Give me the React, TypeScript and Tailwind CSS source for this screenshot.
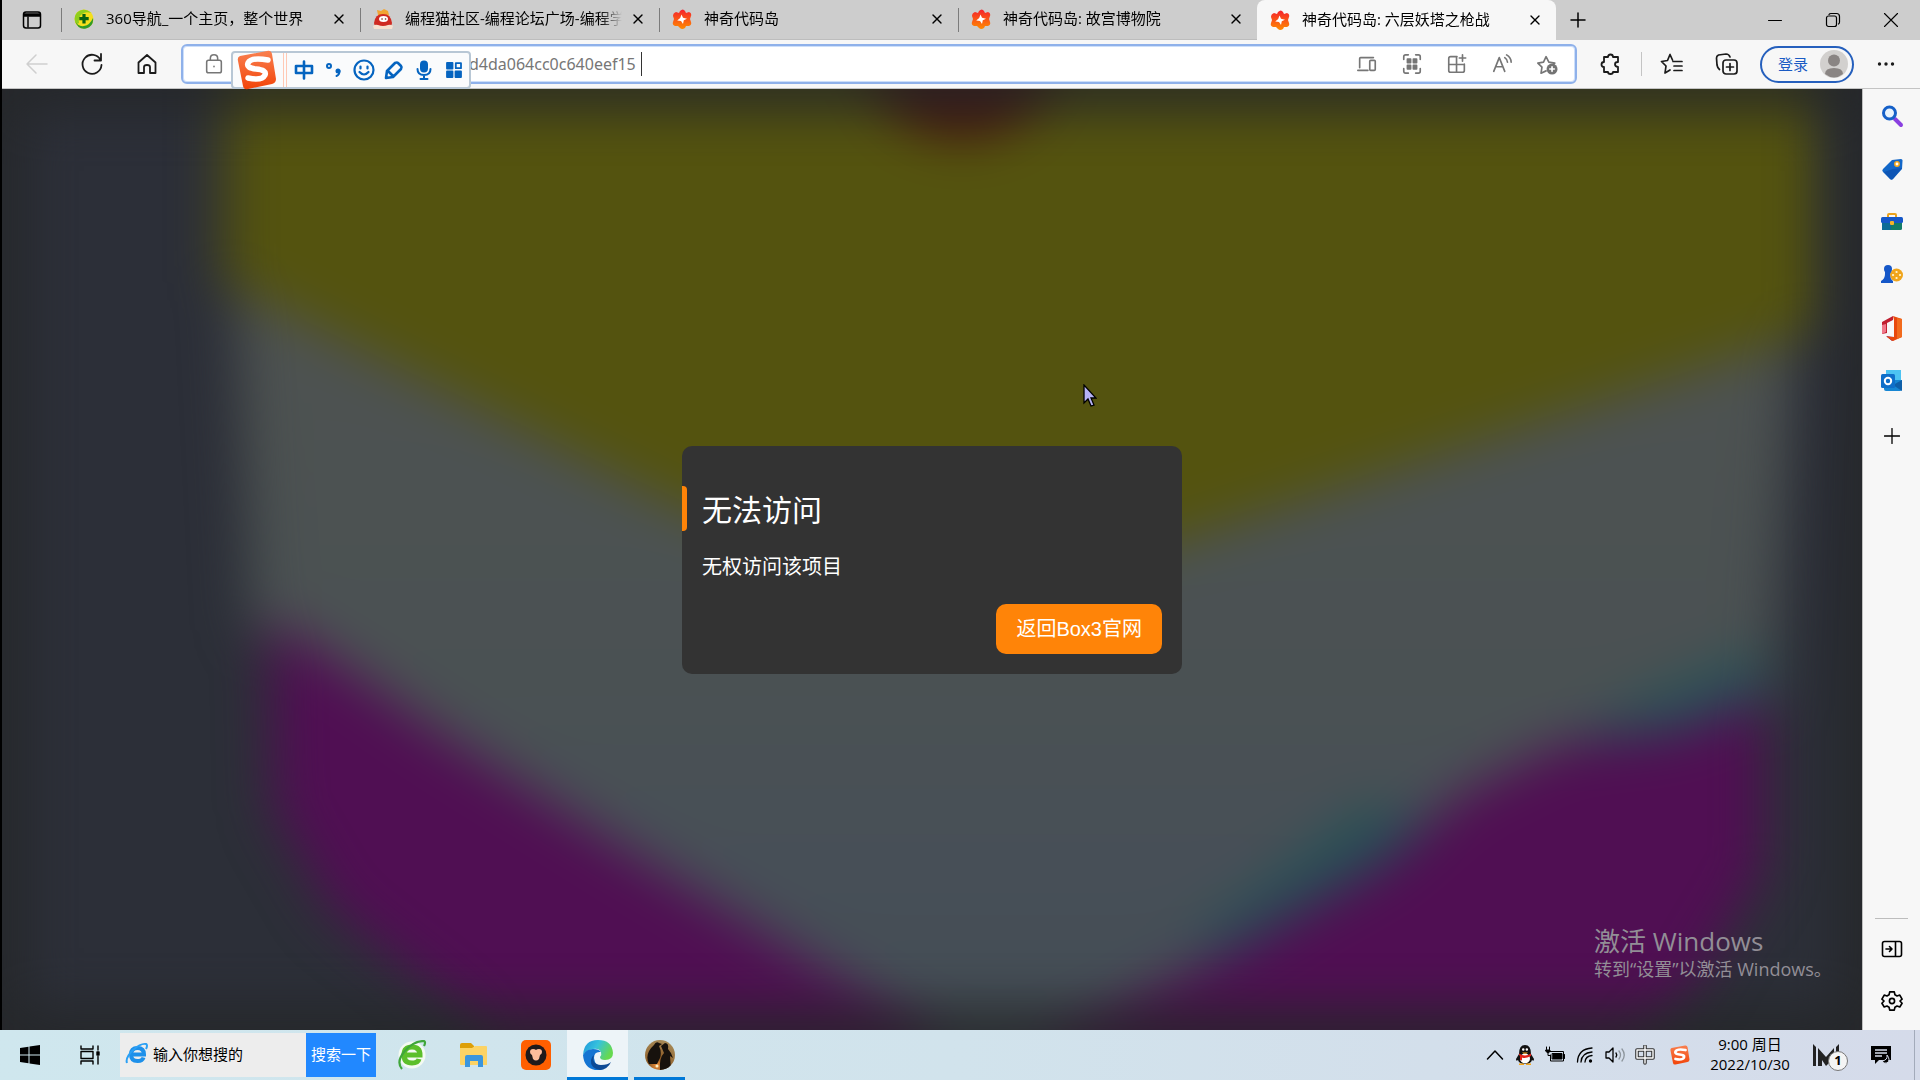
import type { ReactNode } from 'react'
import { X, Plus } from 'lucide-react'

const uiFont = "font-['Open_Sans','Noto_Sans_CJK_SC',sans-serif]"

type IconProps = { children: ReactNode; size?: string; box?: string; width?: number }

function Line({ children, size = 'size-6', box = '0 0 24 24', width = 1.5 }: IconProps) {
  return (
    <svg
      viewBox={box}
      className={`${size} shrink-0`}
      fill="none"
      stroke="currentColor"
      strokeWidth={width}
      strokeLinecap="round"
      strokeLinejoin="round"
      aria-hidden="true"
    >
      {children}
    </svg>
  )
}

function NavFavicon() {
  return (
    <svg viewBox="0 0 20 20" className="size-5 shrink-0" aria-hidden="true">
      <circle cx="10" cy="10" r="9.500" fill="#f5df1c" />
      <path d="M2 5A9.500 9.500 0 0 1 17 4Q12 2 8 5 4 8 5 14 2 16 1 12Q0 8 2 5Z" fill="#8fce1d" />
      <path d="M1 12Q4 18 10 17Q16 16 19 9Q20 17 12 19.500Q4 21 1 12Z" fill="#2f9a28" />
      <path d="M10 5v9.500M5.300 9.700h9.400" stroke="#0a6311" strokeWidth="3.200" />
    </svg>
  )
}

function CatFavicon() {
  return (
    <svg viewBox="0 0 20 20" className="size-5 shrink-0" aria-hidden="true">
      <path d="M5 6 4 1l4 1 3-2 4 2 1 4-2 3H6Z" fill="#f1a533" />
      <path d="M1 14Q2 5 10 5t9 9l-1 4H2Z" fill="#cf2a22" />
      <path d="M0 17q2-2 5-1 5 2 10 0 3-1 5 1l-1 3H1Z" fill="#f6e0cf" />
      <ellipse cx="10.500" cy="10" rx="4.500" ry="3" fill="#fff" />
      <path d="M9 10h.1M12.500 10h.1" stroke="#7b2b20" strokeWidth="1.600" strokeLinecap="round" />
    </svg>
  )
}

function IslandFavicon() {
  return (
    <svg viewBox="0 0 20 20" className="size-5 shrink-0" aria-hidden="true">
      <defs>
        <linearGradient id="island" x1="0" y1="0" x2="0" y2="1">
          <stop offset="0" stopColor="#f5222d" />
          <stop offset="1" stopColor="#ff8a00" />
        </linearGradient>
      </defs>
      <path
        d="M8 2q3-3 5 0l1 2 3-1q3 1 2 4l-1 3 1 3q1 3-2 4l-3 0-1 2q-3 2-5 0l-2-2-3 0Q0 16 1 13l1-3-1-3q0-3 3-4l3 1Z"
        fill="url(#island)"
      />
      <path d="M9.500 5.500 11 8.700l4 1-3.200 1.600-.8 3.700-2-3-3.800-.4 3-2.500Z" fill="#fff" />
    </svg>
  )
}

function SogouLogo({ className }: { className: string }) {
  return (
    <svg viewBox="0 0 40 40" className={className} aria-hidden="true">
      <defs>
        <linearGradient id="sogou" x1="0" y1="0" x2="0" y2="1">
          <stop offset="0" stopColor="#f98050" />
          <stop offset="1" stopColor="#f24409" />
        </linearGradient>
      </defs>
      <path d="M3 6 30 1q4-1 5 3l4 25q0 4-4 5L11 39q-4 1-5-3L1 11q-1-4 2-5Z" fill="url(#sogou)" />
      <path
        d="M31 10q-17-3-20 3-2 5 8 6 11 1 9 6-3 6-17 3"
        fill="none"
        stroke="#fff"
        strokeWidth="5.500"
        strokeLinecap="round"
      />
    </svg>
  )
}

const tabs = [
  { title: '360导航_一个主页，整个世界', icon: <NavFavicon /> },
  { title: '编程猫社区-编程论坛广场-编程学', icon: <CatFavicon /> },
  { title: '神奇代码岛', icon: <IslandFavicon /> },
  { title: '神奇代码岛: 故宫博物院', icon: <IslandFavicon /> },
  { title: '神奇代码岛: 六层妖塔之枪战', icon: <IslandFavicon />, active: true },
]

function TabStrip() {
  return (
    <div className="flex h-10 bg-[#cdcdcd] text-black">
      <button type="button" aria-label="标签页操作" className="flex w-[59px] shrink-0 items-center justify-center">
        <Line size="size-5" box="0 0 20 20">
          <rect x="1.500" y="2" width="17" height="16" rx="2.500" />
          <path d="M2 4h16v2H2Z" fill="currentColor" />
          <path d="M6 7v10" />
        </Line>
      </button>
      {tabs.map((tab) => (
        <div
          key={tab.title}
          className={`relative flex min-w-0 flex-[0_1_299px] items-center pr-[11px] pb-px pl-[11px] ${
            tab.active ? 'rounded-t-lg bg-[#f7f7f7]' : 'border-b border-[#bdbdbd]'
          }`}
        >
          {!tab.active && <span className="absolute top-2 left-0 h-6 w-px bg-[#7b7b7b]" />}
          <button type="button" className="flex min-w-0 flex-1 items-center gap-3 pl-0.5 text-left">
            {tab.icon}
            <span className="min-w-0 flex-1 overflow-hidden mask-r-from-90% mask-r-to-100% pb-0.5 text-[15px] leading-5 whitespace-nowrap">
              {tab.title}
            </span>
          </button>
          <button type="button" aria-label="关闭标签页" className="ml-1.5 flex size-5 shrink-0 items-center justify-center">
            <X className="size-4" strokeWidth={2} />
          </button>
        </div>
      ))}
      <button type="button" aria-label="新建标签页" className="flex w-11 shrink-0 items-center justify-center">
        <Plus className="size-6" strokeWidth={1.5} />
      </button>
      <div className="ml-auto flex">
        <button type="button" aria-label="最小化" className="flex w-[58px] items-center justify-center">
          <Line size="size-4" box="0 0 16 16" width={1}>
            <path d="M1.500 8.500h13" />
          </Line>
        </button>
        <button type="button" aria-label="还原" className="flex w-[58px] items-center justify-center">
          <Line size="size-4" box="0 0 16 16" width={1.2}>
            <rect x="1.500" y="4" width="10" height="10.500" rx="2" />
            <path d="M4 2.500Q4.500 1.500 6 1.500h5.500q3 0 3 3V10q0 1.500-1 2" />
          </Line>
        </button>
        <button type="button" aria-label="关闭" className="flex w-[58px] items-center justify-center">
          <Line size="size-4" box="0 0 16 16" width={1.1}>
            <path d="m1.500 1.500 13 13M14.500 1.500l-13 13" />
          </Line>
        </button>
      </div>
    </div>
  )
}

const addressActions = [
  {
    label: '发送到设备',
    icon: (
      <>
        <path d="M4 16V6q0-1 1-1h14M2 19h11" />
        <rect x="15" y="8" width="6" height="11" rx="1" />
      </>
    ),
  },
  {
    label: '二维码',
    icon: (
      <>
        <path d="M3 7V4q0-2 2-2h3M16 2h3q2 0 2 2v3M21 17v3q0 2-2 2h-3M8 22H5q-2 0-2-2v-3" />
        <path d="M7 6.500h3.500v4H7ZM13.500 6.500H17v4h-3.500ZM7 13.500h3.500v4H7ZM13.500 13.500H17v4h-3.500Z" fill="currentColor" />
      </>
    ),
  },
  {
    label: '应用可用',
    icon: (
      <path d="M12 4H5Q3 4 3 6v13q0 2 2 2h13q2 0 2-2v-7M3 12.500h17M11.500 4v17M18 2v7M14.500 5.500h7" />
    ),
  },
  {
    label: '大声朗读',
    icon: <path d="M3 20 9 5l6 15M5 15h8M15 5q3 2 3 5M17 2q5 3 5 8" />,
  },
  {
    label: '添加到收藏夹',
    icon: (
      <>
        <path d="M11 19.500 5.500 22l1-6.500L2 11l6.200-1L11 4l3 6 6.500 1-2 2" />
        <circle cx="17.500" cy="17.500" r="6" fill="#737373" stroke="none" />
        <path d="M17.500 15v5M15 17.500h5" stroke="#fff" />
      </>
    ),
  },
]

function InputMethodBar() {
  const item = 'flex w-[30px] shrink-0 items-center justify-center'
  return (
    <div className="absolute top-[51px] left-[229px] z-10 flex h-[38px] w-[240px] rounded border-2 border-[#b8c7d5] bg-[#fafbfc] text-[#0564c0]">
      <SogouLogo className="ml-1 size-10 shrink-0 self-center" />
      <span className="mr-0.5 ml-1.5 w-1 shrink-0 border-x border-[#ffc9b5]" />
      <button type="button" aria-label="中文" className={item}>
        <Line size="size-5" box="0 0 20 20" width={2.6}>
          <path d="M2 6h16v7H2ZM10 1.500v17" />
        </Line>
      </button>
      <button type="button" aria-label="标点" className={item}>
        <Line size="size-5" box="0 0 20 20" width={2}>
          <circle cx="5" cy="6" r="2" />
          <circle cx="14" cy="11" r="1.500" fill="currentColor" />
          <path d="M15.500 11q0 4-3 5" />
        </Line>
      </button>
      <button type="button" aria-label="表情" className={item}>
        <Line size="size-6" width={2.2}>
          <circle cx="12" cy="12" r="9.500" />
          <path d="M8.500 8.500v2M15.500 8.500v2M7.500 14q4.500 5 9 0" />
        </Line>
      </button>
      <button type="button" aria-label="手写" className={item}>
        <Line size="size-5" box="0 0 20 20" width={2.6}>
          <path d="m2 18 1-7 8-8q2-1 3 0l3 3q1 1 0 3l-8 8ZM4 11l5 5" />
        </Line>
      </button>
      <button type="button" aria-label="语音" className={item}>
        <Line size="size-5" box="0 0 20 20" width={2}>
          <rect x="7" y="1.500" width="6" height="10" rx="3" fill="currentColor" />
          <path d="M3.500 9q0 6 6.500 6t6.500-6M10 15v3M6.500 19h7" />
        </Line>
      </button>
      <button type="button" aria-label="工具箱" className={item}>
        <Line size="size-4" box="0 0 16 16" width={1.8}>
          <path d="M1 1h5.500v5.500H1ZM1 9.500h5.500V15H1ZM9.500 9.500H15V15H9.500Z" fill="currentColor" />
          <path d="M9.800 1.200H15v5H9.800Z" />
        </Line>
      </button>
    </div>
  )
}

function Toolbar() {
  const nav = 'flex w-[55px] shrink-0 items-center justify-center'
  return (
    <div className="flex h-[49px] items-center border-b border-[#c4c4c4] bg-[#f7f7f7] pr-0.5 pl-[7px] text-[#1b1b1b]">
      <button type="button" aria-label="后退" className={`${nav} text-[#cfcfcf]`}>
        <Line>
          <path d="M22 12H2M11 3l-9 9 9 9" />
        </Line>
      </button>
      <button type="button" aria-label="刷新" className={nav}>
        <Line width={1.8}>
          <path d="M20.500 8A9.500 9.500 0 1 0 21.500 13M21 2v6.500h-6.500" />
        </Line>
      </button>
      <button type="button" aria-label="主页" className={nav}>
        <Line width={1.8}>
          <path d="M3.500 10.500 12 3l8.500 7.500V21H15v-6q0-2-3-2t-3 2v6H3.500Z" />
        </Line>
      </button>
      <div className="ml-[7px] flex h-10 min-w-0 flex-1 items-center rounded-md border-2 border-[#8fb1ea] bg-white pr-1.5 text-[#767676] shadow-[inset_0_0_0_1px_#cddffa]">
        <button type="button" aria-label="查看站点信息" className="ml-5 shrink-0">
          <Line size="size-[22px]" width={1.7}>
            <rect x="4" y="8" width="16" height="13.500" rx="2" />
            <path d="M8 8V6q0-4 4-4t4 4v2M12 14.500v.6" />
          </Line>
        </button>
        <input
          aria-label="地址栏"
          defaultValue="d4da064cc0c640eef15"
          className="ml-[244px] w-[172px] bg-transparent font-['Noto_Sans',sans-serif] text-base leading-6 outline-none"
        />
        <span className="h-6 w-px bg-[#333333]" />
        <div className="ml-auto flex">
          {addressActions.map((action) => (
            <button key={action.label} type="button" aria-label={action.label} className="flex w-[45px] items-center justify-center">
              <Line size="size-[22px]" width={1.8}>
                {action.icon}
              </Line>
            </button>
          ))}
        </div>
      </div>
      <button type="button" aria-label="扩展" className="ml-1 flex w-[60px] items-center justify-center">
        <Line width={1.8}>
          <path d="M9 5q0-2.500 2.500-2.500T14 5h5v5q-3 0-3 2.300T19 15v5h-5q0 2-2.500 2T9 20H5v-5q-2.500 0-2.500-2.500T5 10V5Z" />
        </Line>
      </button>
      <span className="h-6 w-px bg-[#c4c4c4]" />
      <button type="button" aria-label="收藏夹" className="flex w-[60px] items-center justify-center">
        <Line width={1.7}>
          <path d="M12.500 8 10 2.500 7.500 8.500 1.500 9.500 6 14l-1 7 5-3M13 9.500h9M14 14h8M14 18.500h8" />
        </Line>
      </button>
      <button type="button" aria-label="集锦" className="flex w-[50px] items-center justify-center">
        <Line width={1.7}>
          <rect x="8" y="8" width="14" height="14" rx="3" />
          <path d="M15 11.500v7M11.500 15h7M4.500 17.500Q2.500 16 2 13L1.500 6q0-2 2-3L11 2q3 0 4 3" />
        </Line>
      </button>
      <button
        type="button"
        className="ml-2 flex h-[37px] w-[94px] shrink-0 items-center justify-between rounded-full border-2 border-[#2660bd] pr-1 pl-4 text-[15px] text-[#1a5bc4]"
      >
        登录
        <svg viewBox="0 0 28 28" className="size-7" aria-hidden="true">
          <circle cx="14" cy="14" r="14" fill="#d2d0ce" />
          <circle cx="14" cy="10.500" r="6" fill="#8a8583" />
          <path d="M5 24q0-6 9-6t9 6q-9 7-18 0Z" fill="#8a8583" />
        </svg>
      </button>
      <button type="button" aria-label="设置及其他" className="flex w-16 shrink-0 items-center justify-center">
        <svg viewBox="0 0 18 18" className="size-[18px]" fill="currentColor" aria-hidden="true">
          <circle cx="2.500" cy="9" r="1.700" />
          <circle cx="9" cy="9" r="1.700" />
          <circle cx="15.500" cy="9" r="1.700" />
        </svg>
      </button>
    </div>
  )
}

function Backdrop() {
  return (
    <svg viewBox="0 0 1860 941" preserveAspectRatio="none" className="absolute inset-0 size-full" aria-hidden="true">
      <defs>
        <filter id="soft" x="-20%" y="-20%" width="140%" height="140%" colorInterpolationFilters="sRGB">
          <feGaussianBlur stdDeviation="26" />
        </filter>
        <linearGradient id="slate" x1="0" y1="0" x2="0" y2="1">
          <stop offset="0.2" stopColor="#4d5251" />
          <stop offset="0.55" stopColor="#4a5153" />
          <stop offset="0.75" stopColor="#474f57" />
          <stop offset="1" stopColor="#424c54" />
        </linearGradient>
      </defs>
      <rect width="1860" height="941" fill="#2c2f38" />
      <g filter="url(#soft)">
        <path d="M228 100H1800L1770 620 1500 780 1040 1000H860L250 540Z" fill="url(#slate)" />
        <path d="M222-80H1816V240L1180 450 941 530 684 420 222 192Z" fill="#54530f" />
        <path d="M840-80H1080L1030 20Q960 75 890 20Z" fill="#47130f" />
        <path d="M1760 560 1640 610 1520 680 1380 760 1190 880 1250 860 1450 740 1760 660Z" fill="#255256" />
        <path d="M1360 720 1180 860 1290 850 1440 730Z" fill="#245055" />
        <path d="M268 530 340 576 440 646 622 760 730 825 830 886 930 950 900 1040 520 1040 470 930 330 820 272 720Z" fill="#500f53" />
        <path d="M1762 605 1680 640 1560 655 1460 705 1380 775 1240 855 1140 910 1050 960 1020 1040 1560 1040 1690 900 1762 780Z" fill="#500f53" />
      </g>
      <rect
        x="-10"
        y="-10"
        width="1880"
        height="961"
        fill="none"
        stroke="#242628"
        strokeWidth="60"
        opacity="0.9"
        filter="url(#soft)"
      />
    </svg>
  )
}

function GamePage() {
  return (
    <main className="relative flex min-w-0 flex-1 items-center justify-center overflow-hidden bg-[#2c2f38]">
      <Backdrop />
      <section
        role="alertdialog"
        aria-labelledby="denied"
        className="relative w-[500px] rounded-[10px] bg-[#333333] pt-10 pb-5 font-['Liberation_Sans','Noto_Sans_CJK_SC',sans-serif] text-xl text-white"
      >
        <div className="flex h-[45px] items-end">
          <span className="h-full w-[5px] rounded-r-sm bg-[#ff8408]" />
          <h1 id="denied" className="pt-1 pl-[15px] text-3xl leading-[41px]">
            无法访问
          </h1>
        </div>
        <p className="mt-[21px] px-5 leading-[30px]">无权访问该项目</p>
        <div className="mt-[22px] flex justify-end px-5">
          <button type="button" className="h-[50px] rounded-[10px] bg-[#ff8408] px-5">
            返回Box3官网
          </button>
        </div>
      </section>
      <svg viewBox="0 0 14 24" className="absolute top-[295px] left-[1081px] h-6 w-3.5" aria-hidden="true">
        <path d="M1 1v18l4-4 3 7 3-1-3-7h5Z" fill="#b5b2f5" stroke="#000" strokeWidth="1.300" />
      </svg>
      <div className="absolute right-8 bottom-[49px] w-[236px] whitespace-nowrap text-[#928e96]">
        <p className="text-[26px] leading-8">激活 Windows</p>
        <p className="text-lg leading-6">转到“设置”以激活 Windows。</p>
      </div>
    </main>
  )
}

const sideApps = [
  {
    label: '搜索',
    art: (
      <>
        <path d="m14 14 6 6" stroke="#8a3fe0" strokeWidth="4" strokeLinecap="round" />
        <circle cx="8.500" cy="8" r="6" fill="#e8f3fc" stroke="#1560c8" strokeWidth="3" />
      </>
    ),
  },
  {
    label: '购物',
    art: (
      <>
        <path d="M2 11 11 2l9-1q1.500 0 1.500 1.500L21 11l-9 10q-1.500 1.500-3 0l-7-7q-1.500-1.500 0-3Z" fill="#1267c8" />
        <path d="m3 14 9-3 9-1-9 11q-1.500 1.500-3 0Z" fill="#0a4aa8" opacity=".6" />
        <circle cx="16" cy="6" r="2.200" fill="#fff" stroke="#f5a91b" strokeWidth="1.500" />
      </>
    ),
  },
  {
    label: '工具',
    art: (
      <>
        <path d="M7 7V4q0-1 1-1h6q1 0 1 1v3" fill="none" stroke="#eaa21c" strokeWidth="2" />
        <rect x="1" y="10" width="20" height="9" rx="1.500" fill="#137c68" />
        <path d="M1 19V11h9v8Z" fill="#0d6b96" />
        <rect x="0" y="6" width="22" height="6" rx="1.500" fill="#1557c8" />
        <rect x="9" y="10" width="4" height="4" rx="1" fill="#f5b32a" />
      </>
    ),
  },
  {
    label: '游戏',
    art: (
      <>
        <circle cx="15.500" cy="11" r="6.500" fill="#f0a51c" />
        <path d="M12 11h.1M15.500 8h.1M19 11h.1M15.500 14h.1" stroke="#fff4d0" strokeWidth="2.200" strokeLinecap="round" />
        <circle cx="7" cy="5" r="4" fill="#1557c8" />
        <path d="M4 8h6l-1 2q0 5 3 7v2H0v-2q4-2 4-7Z" fill="#1557c8" />
      </>
    ),
  },
  {
    label: 'Office',
    art: (
      <>
        <path d="M1 5 12-1v4L6 6v10l-5 1Z" fill="#c01f30" />
        <path d="M1 17V8l4-1v8Z" fill="#f0788a" />
        <path d="m5 19 8 1v3l-2 1Z" fill="#a8142a" />
        <path d="m12-1 9 3v18l-9 4-6-4 7 0V3Z" fill="#e8480c" />
        <path d="m16 1 5 1v18l-5 2Z" fill="#f26a1c" />
      </>
    ),
  },
  {
    label: 'Outlook',
    art: (
      <>
        <rect x="5" y="0" width="15" height="12" fill="#4cc3f2" />
        <path d="M3 10h18v9q0 2-2 2H5q-2 0-2-2Z" fill="#1686d3" />
        <path d="m21 10-9 5 9 6Z" fill="#0f5fa8" />
        <rect x="0" y="4" width="14" height="14" rx="1.500" fill="#0f6fc9" />
        <circle cx="7" cy="11" r="3.200" fill="none" stroke="#fff" strokeWidth="2" />
      </>
    ),
  },
]

function SideBar() {
  const cell = 'flex h-[53px] items-center justify-center'
  return (
    <aside className="flex w-[58px] shrink-0 flex-col border-l border-[#c0c0c0] bg-[#f7f7f7] pb-[3px] text-black">
      {sideApps.map((app) => (
        <button key={app.label} type="button" aria-label={app.label} className={cell}>
          <svg viewBox="0 0 22 22" className="size-[22px] overflow-visible" aria-hidden="true">
            {app.art}
          </svg>
        </button>
      ))}
      <button type="button" aria-label="自定义侧边栏" className="flex h-[58px] items-center justify-center">
        <Line size="size-4" box="0 0 16 16" width={1.3}>
          <path d="M8 .5v15M.5 8h15" />
        </Line>
      </button>
      <hr className="mx-3 mt-auto mb-1 border-[#bdbdbd]" />
      <button type="button" aria-label="隐藏侧边栏" className="flex h-[52px] items-center justify-center">
        <Line size="size-[22px]" box="0 0 22 22" width={1.6}>
          <rect x="1.500" y="3.500" width="19" height="15" rx="2" />
          <path d="M14.500 4v14M5 11h6M8.500 8.500 11 11l-2.500 2.500" />
        </Line>
      </button>
      <button type="button" aria-label="设置" className="flex h-[52px] items-center justify-center">
        <Line size="size-[22px]" width={1.8}>
          <path d="m9.500 2-.7 3.200-2.300 1.300L3.500 5.500 1 10l2.300 2L1 14.500l2.500 4 3-1 2.300 1.300.7 3.200h5l.7-3.200 2.300-1.300 3 1 2.500-4L20.700 12 23 10l-2.500-4.500-3 1-2.300-1.300L14.500 2Z" />
          <circle cx="12" cy="12" r="2.800" />
        </Line>
      </button>
    </aside>
  )
}

function TaskBar() {
  const app = 'flex w-[62px] shrink-0 items-center justify-center border-b-[3px] border-transparent pt-0.5'
  const tray = 'flex w-[30px] shrink-0 items-center justify-center'
  return (
    <footer className="flex h-[50px] shrink-0 bg-linear-to-r from-[#cfe7ee] via-[#d1e3ec] to-[#d5dbea] text-black">
      <button type="button" aria-label="开始" className="flex w-[60px] items-center justify-center">
        <svg viewBox="0 0 20 20" className="size-5" aria-hidden="true">
          <path d="M0 3 8.500 1.800v7.700H0ZM9.500 1.600 20 0v9.500H9.500ZM0 10.500h8.500v7.700L0 17ZM9.500 10.500H20V20L9.500 18.400Z" />
        </svg>
      </button>
      <button type="button" aria-label="任务视图" className="flex w-[60px] items-center justify-center">
        <Line size="size-5" box="0 0 20 20" width={1.4}>
          <path d="M1 1v3h12V1M1 19v-3h12v3M1 6.500h12v7H1ZM18 1v4M18 11.500V19" />
          <path d="M17 7h2v3h-2Z" fill="currentColor" />
        </Line>
      </button>
      <form className="my-[3px] flex w-[256px] shrink-0 text-[15px]" onSubmit={(event) => event.preventDefault()}>
        <label className="flex min-w-0 flex-1 items-center gap-1 bg-[#ededed] pb-0.5 pl-[5px]">
          <svg viewBox="0 0 24 24" className="size-6 shrink-0" fill="none" aria-hidden="true">
            <path d="M6 12.500h13Q19 6 12.500 6T6 12.500q0 6.500 6.500 6.500 5 0 6-3.500" stroke="#1e90ea" strokeWidth="4" />
            <path d="M2 21Q0 16 8 8q8-7 13-6 2 1 0 5" stroke="#2ba0f5" strokeWidth="2" />
          </svg>
          <input
            aria-label="搜索"
            placeholder="输入你想搜的"
            className="w-full min-w-0 bg-transparent outline-none placeholder:text-black"
          />
        </label>
        <button type="submit" className="w-[70px] shrink-0 bg-[#2188ff] pb-0.5 text-white">
          搜索一下
        </button>
      </form>
      <div className="ml-[5px] flex">
        <button type="button" aria-label="360浏览器" className={app}>
          <svg viewBox="0 0 30 30" className="size-[30px]" fill="none" aria-hidden="true">
            <circle cx="15" cy="15" r="13.500" fill="#f4faf2" />
            <path d="M8 15h15q0-8-8-8t-8 8q0 8 8 8 6 0 7-4" stroke="#5cbf2a" strokeWidth="5" />
            <path d="M5 29Q-1 22 7 12 16 1 27 1q2 1 0 5" stroke="#3fa63a" strokeWidth="2.200" />
          </svg>
        </button>
        <button type="button" aria-label="文件资源管理器" className={app}>
          <svg viewBox="0 0 30 30" className="size-[30px]" aria-hidden="true">
            <path d="M1 5q0-2 2-2h9l3 3v5H1Z" fill="#dd9f08" />
            <path d="M1 8h12l3-2h11q1 0 1 1v18H2q-1 0-1-1Z" fill="#fcd364" />
            <path d="M6 27V17q0-2 2-2h14q2 0 2 2v10h-5v-6h-8v6Z" fill="#3b96dd" />
          </svg>
        </button>
        <button type="button" aria-label="编程猫" className={app}>
          <svg viewBox="0 0 30 30" className="size-[30px]" aria-hidden="true">
            <rect width="30" height="30" rx="5" fill="#ff5f00" />
            <circle cx="15" cy="15" r="10.500" fill="#1f1a1b" />
            <path d="M9 12q0-3 3-3 2 0 3 1 1-1 3-1 3 0 3 3 0 2-2 3l-1 4q-3 3-6 0l-1-4q-2-1-2-3Z" fill="#fdbd9c" />
          </svg>
        </button>
        <button
          type="button"
          aria-label="Microsoft Edge"
          className="flex w-[61px] items-center justify-center border-b-[3px] border-[#0078d7] bg-[#edf4f8] pt-0.5"
        >
          <svg viewBox="0 0 30 30" className="size-[30px]" aria-hidden="true">
            <defs>
              <linearGradient id="edge" x1="0" y1="0" x2="1" y2="0.4">
                <stop offset="0" stopColor="#1c93dc" />
                <stop offset="0.5" stopColor="#36c2dd" />
                <stop offset="1" stopColor="#66d950" />
              </linearGradient>
            </defs>
            <path d="M0 15Q1 0 15 0t15 13q0 7-8 7-5 0-5-3 2-2 1-5-2-4-8-3Q3 10 0 15Z" fill="url(#edge)" />
            <path d="M0 15Q3 9 10 9q6 0 8 3-7-1-7 6 1 9 10 11-5 2-9 1Q1 28 0 15Z" fill="#1474d2" />
            <path d="M11 15q-3 9 7 10 7 0 10-3-3 7-11 8Q7 28 8 20q1-4 3-5Z" fill="#0d4a95" />
          </svg>
        </button>
        <button type="button" aria-label="企鹅" className="ml-1.5 flex w-[51px] items-center justify-center border-b-[3px] border-[#0078d7] pt-0.5">
          <svg viewBox="0 0 30 30" className="size-[30px]" aria-hidden="true">
            <defs>
              <radialGradient id="dusk" cx="0.4" cy="0.85" r="0.9">
                <stop offset="0" stopColor="#f0903c" />
                <stop offset="0.3" stopColor="#8d5a24" />
                <stop offset="1" stopColor="#a88d5b" />
              </radialGradient>
              <clipPath id="round">
                <circle cx="15" cy="15" r="15" />
              </clipPath>
            </defs>
            <g clipPath="url(#round)">
              <rect width="30" height="30" fill="url(#dusk)" />
              <path d="M9 5q2-4 5-2l3 1-3 2q3 6 1 12l-3 6H4Q-1 14 9 5Z" fill="#17120d" />
              <path d="m16 6 4-3q4 0 3 6 3 3 5 9l-3-2 1 14H15q-1-12 4-17Z" fill="#17120d" />
              <circle cx="12" cy="26" r="1.500" fill="#fff1c4" />
            </g>
          </svg>
        </button>
      </div>
      <div className="ml-auto flex">
        <button type="button" aria-label="显示隐藏的图标" className={tray}>
          <Line size="size-[18px]" box="0 0 18 18" width={1.5}>
            <path d="m1.500 13 7.500-8 7.500 8" />
          </Line>
        </button>
        <button type="button" aria-label="QQ" className={tray}>
          <svg viewBox="0 0 18 20" className="h-5 w-[18px]" aria-hidden="true">
            <path d="M3 9Q3 0 9 0t6 9l3 5q0 3-2 1-1 4-7 4t-7-4Q0 17 0 14Z" fill="#111" />
            <ellipse cx="9" cy="13.500" rx="5" ry="5" fill="#fff" />
            <path d="M3 8.500q6 4 12 0v2.500q-6 3-9 1.500v3l-2-.5V11L3 10Z" fill="#e2231a" />
            <path d="M7.200 4.500h.1M10.800 4.500h.1" stroke="#fff" strokeWidth="2.400" strokeLinecap="round" />
            <path d="M6 7.500h6q-3 2.500-6 0ZM3 18.500h5v1.500H3ZM10 18.500h5v1.500h-5Z" fill="#f5a61a" />
          </svg>
        </button>
        <button type="button" aria-label="电池" className={tray}>
          <Line size="size-5" box="0 0 20 20" width={1}>
            <path d="M5 6.500h13.500v9.500H5.500V10M19.500 9.500v4M1.500 2v2.500M4.500 2v2.500M3 8v2.500h2.500" />
            <path d="M7.500 8.500h9.500v5.500H7.500ZM1 5h4v1.500L3 8 1 6.500Z" fill="currentColor" />
          </Line>
        </button>
        <button type="button" aria-label="网络" className={tray}>
          <Line size="size-[18px]" box="0 0 18 18" width={1.3}>
            <path d="M1.500 16Q2 3 16 2M5 16Q5.500 7 16 6M9 16q.5-6 7-6.500" />
            <circle cx="14.500" cy="15" r="1" fill="currentColor" />
          </Line>
        </button>
        <button type="button" aria-label="音量" className={tray}>
          <Line size="size-5" box="0 0 20 20" width={1.3}>
            <path d="M1 7h3l4-4v14l-4-4H1ZM11 8q1.500 2 0 4" />
            <path d="M14 6q3 4 0 8M17 4q4.500 6 0 12" stroke="#8d959c" />
          </Line>
        </button>
        <button type="button" aria-label="中文输入" className={tray}>
          <Line size="size-5" box="0 0 20 20">
            <path d="M2 5h16v8H2ZM10 1v17" stroke="#333" strokeWidth="3.600" />
            <path d="M2 5h16v8H2ZM10 1v17" stroke="#fff" strokeWidth="1.400" />
          </Line>
        </button>
        <button type="button" aria-label="搜狗输入法" className="flex w-10 items-center justify-center">
          <SogouLogo className="size-5" />
        </button>
        <button type="button" className="w-[100px] pb-0.5 text-center text-[15px] leading-5">
          <span className="block">9:00 周日</span>
          <span className="block">2022/10/30</span>
        </button>
        <button type="button" aria-label="通知消息" className="relative flex w-[52px] items-center justify-center">
          <svg viewBox="0 0 28 22" className="h-[22px] w-7" aria-hidden="true">
            <path d="M1 0 4 3v19H1ZM6 4l8 9 8-9v10l-8 8-4-6v6H6ZM24 3l3-3v12h-3Z" fill="#222" />
          </svg>
          <span className="absolute right-1 bottom-[9px] flex size-5 items-center justify-center rounded-full border border-[#777777] bg-[#f4f4f4] text-[13px] font-bold">
            1
          </span>
        </button>
        <button type="button" aria-label="操作中心" className="flex w-[58px] items-center justify-center">
          <svg viewBox="0 0 20 20" className="size-5" aria-hidden="true">
            <path d="M0 1h20v14H8l-4 4v-4H0Z" />
            <path d="M4 5h12M4 8h12M4 11h7" stroke="#d5dbea" strokeWidth="1.300" />
            <path d="M16 10q1 5-5 6 2 3 5 2 4-3 0-8Z" stroke="#d5dbea" />
          </svg>
        </button>
        <span className="mr-[5px] ml-1 w-px bg-[#a3abba]" />
      </div>
    </footer>
  )
}

export default function App() {
  return (
    <div className={`flex h-screen flex-col overflow-hidden ${uiFont}`}>
      <div className="relative flex min-h-0 flex-1 flex-col border-l-2 border-black">
        <TabStrip />
        <Toolbar />
        <InputMethodBar />
        <div className="flex min-h-0 flex-1">
          <GamePage />
          <SideBar />
        </div>
      </div>
      <TaskBar />
    </div>
  )
}
